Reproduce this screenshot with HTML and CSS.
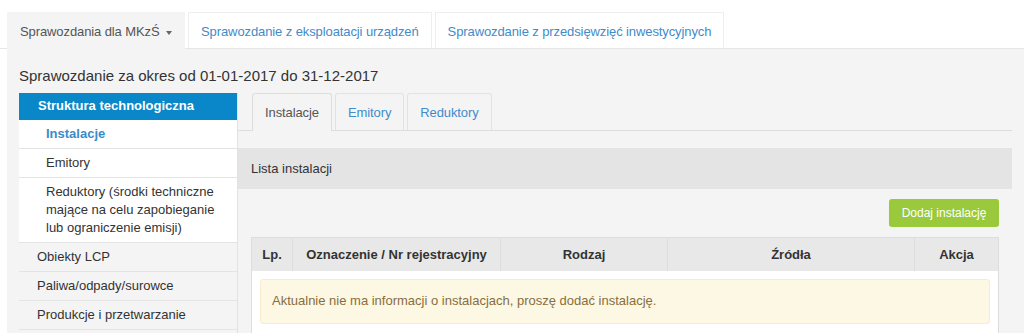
FILE: index.html
```html
<!DOCTYPE html>
<html lang="pl">
<head>
  <meta charset="UTF-8" />
  <title>Sprawozdanie</title>
  <link rel="stylesheet" href="styles.css">
</head>
<body>
  <div class="top-tabs">
    <a class="top-tab active">Sprawozdania dla MKzŚ <span class="caret"></span></a>
    <a class="top-tab">Sprawozdanie z eksploatacji urządzeń</a>
    <a class="top-tab">Sprawozdanie z przedsięwzięć inwestycyjnych</a>
  </div>

  <div class="main">
    <h3 class="period">Sprawozdanie za okres od 01-01-2017 do 31-12-2017</h3>

    <div class="cols">
      <ul class="side">
        <li class="side-head">Struktura technologiczna</li>
        <li class="side-sub current">Instalacje</li>
        <li class="side-sub">Emitory</li>
        <li class="side-sub">Reduktory (środki techniczne mające na celu zapobieganie lub ograniczenie emisji)</li>
        <li class="side-item">Obiekty LCP</li>
        <li class="side-item">Paliwa/odpady/surowce</li>
        <li class="side-item">Produkcje i przetwarzanie</li>
      </ul>

      <div class="content">
        <div class="inner-tabs">
          <a class="inner-tab active">Instalacje</a>
          <a class="inner-tab">Emitory</a>
          <a class="inner-tab">Reduktory</a>
        </div>

        <div class="panel-head">Lista instalacji</div>

        <div class="panel-body">
          <div class="toolbar">
            <button class="btn-add">Dodaj instalację</button>
          </div>

          <table class="list">
            <thead>
              <tr>
                <th class="c-lp">Lp.</th>
                <th class="c-name">Oznaczenie / Nr rejestracyjny</th>
                <th class="c-kind">Rodzaj</th>
                <th class="c-src">Źródła</th>
                <th class="c-act">Akcja</th>
              </tr>
            </thead>
            <tbody>
              <tr>
                <td colspan="5">
                  <div class="alert">Aktualnie nie ma informacji o instalacjach, proszę dodać instalację.</div>
                </td>
              </tr>
            </tbody>
          </table>
        </div>
      </div>
    </div>
  </div>
</body>
</html>
```

FILE: styles.css
```css
body {
  margin: 0;
  background: #fff;
  color: #333;
  font-family: "Liberation Sans", Arial, sans-serif;
  font-size: 13px;
  overflow: hidden;
}

/* top report tabs */
.top-tabs {
  display: flex;
  gap: 3px;
  padding: 12px 0 0 7px;
  border-bottom: 1px solid #e6e6e6;
}

.top-tab {
  display: block;
  padding: 0 12px;
  height: 35px;
  line-height: 37px;
  color: #428bca;
  background: #fff;
  border: 1px solid #eee;
  border-bottom: none;
  letter-spacing: -0.1px;
  text-decoration: none;
}

.top-tab.active {
  color: #555;
  background: #f4f4f4;
  border-color: #f4f4f4;
  margin-bottom: -1px;
  height: 36px;
}

.caret {
  display: inline-block;
  width: 0;
  height: 0;
  margin-left: 3px;
  vertical-align: middle;
  border-top: 4px solid #666;
  border-left: 3px solid transparent;
  border-right: 3px solid transparent;
}

.main {
  background: #f4f4f4;
  margin-left: 7px;
  padding-left: 12px;
  height: 300px;
}

.period {
  margin: 0;
  padding-top: 17px;
  height: 27px;
  font-size: 15px;
  font-weight: normal;
  line-height: 20px;
  color: #333;
}

.cols {
  display: flex;
}

/* left menu */
.side {
  list-style: none;
  margin: 0;
  padding: 0;
  width: 218px;
  border-right: 1px solid #e2e2e2;
}

.side li {
  padding: 5px 18px;
  line-height: 18px;
  border-bottom: 1px solid #e4e4e4;
}

.side .side-head {
  background: #0a87c9;
  color: #fff;
  font-weight: bold;
  padding: 4px 19px 5px;
  border-bottom: none;
}

.side .side-sub {
  background: #fff;
  padding-left: 27px;
  padding-right: 10px;
}

.side .side-sub.current {
  color: #3a8cc9;
  font-weight: bold;
}

.side .side-item {
  background: #f4f4f4;
}

/* right side */
.content {
  flex: 1;
  margin-right: 12px;
}

.inner-tabs {
  display: flex;
  gap: 3px;
  padding-left: 14px;
  border-bottom: 1px solid #ddd;
}

.inner-tab {
  display: block;
  height: 36px;
  line-height: 38px;
  padding: 0 12px;
  color: #428bca;
  border: 1px solid #e2e2e2;
  border-bottom: none;
  border-radius: 3px 3px 0 0;
  letter-spacing: -0.1px;
  text-decoration: none;
}

.inner-tab.active {
  color: #555;
  background: #f4f4f4;
  border-color: #ddd;
  margin-bottom: -1px;
  height: 37px;
}

.panel-head {
  margin-top: 17px;
  background: #e4e4e4;
  height: 41px;
  line-height: 41px;
  padding-left: 13px;
  color: #333;
}

.panel-body {
  padding: 10px 13px 0;
}

.toolbar {
  display: flex;
  justify-content: flex-end;
  margin-bottom: 10px;
}

.btn-add {
  background: #9aca3c;
  color: #fff;
  border: none;
  border-radius: 3px;
  width: 110px;
  height: 28px;
  font-family: inherit;
  font-size: 12px;
}

.list {
  width: 100%;
  border-collapse: collapse;
  background: #fff;
  border: 1px solid #ddd;
}

.list th {
  background: #e8e8e8;
  height: 33px;
  padding: 0 8px;
  border-left: 1px solid #ddd;
  font-weight: bold;
  text-align: center;
  color: #333;
}

.list th:first-child {
  border-left: none;
}

.c-lp { width: 24px; }
.c-name { width: 191px; }
.c-kind { width: 150px; }
.c-act { width: 67px; }

.list td {
  padding: 8px 8px 15px;
}

.alert {
  background: #fcf8e3;
  border: 1px solid #faebcc;
  border-radius: 3px;
  color: #8a6d3b;
  padding: 13px 11px 14px;
  line-height: 16px;
}
```
